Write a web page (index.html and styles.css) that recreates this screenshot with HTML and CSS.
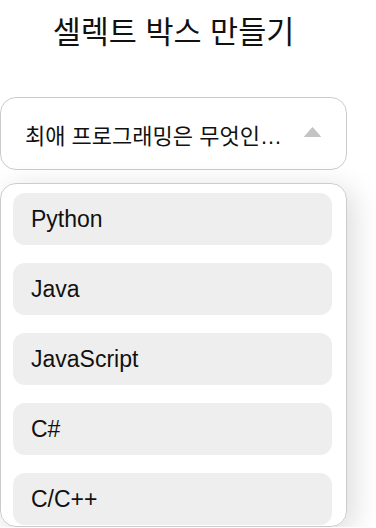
FILE: index.html
```html
<!DOCTYPE html>
<html lang="ko">
<head>
    <meta charset="UTF-8">
    <meta name="viewport" content="width=device-width, initial-scale=1.0">
    <title>셀렉트 박스 만들기</title>
    <link rel="stylesheet" href="styles.css">
</head>
<body>
    <main class="wrap">
        <h1>셀렉트 박스 만들기</h1>
        <div class="select">
            <p class="select_label">최애 프로그래밍은 무엇인가요?</p>
            <svg class="arrow" width="17" height="10" viewBox="0 0 17 10">
                <path d="M8.5 0.5 L16.5 9.5 L0.5 9.5 Z" fill="#c4c4c4" stroke="#c4c4c4" stroke-width="1" stroke-linejoin="round"/>
            </svg>
        </div>
        <ul class="option_list">
            <li class="option">Python</li>
            <li class="option">Java</li>
            <li class="option">JavaScript</li>
            <li class="option">C#</li>
            <li class="option">C/C++</li>
        </ul>
    </main>
</body>
</html>
```

FILE: styles.css
```css
* {
    margin: 0;
    padding: 0;
    box-sizing: border-box;
}
body {
    font-family: "Liberation Sans", "Noto Sans CJK KR", sans-serif;
    color: #111;
    background-color: white;
    overflow: hidden;
}
.wrap {
    width: 347px;
    padding-top: 10px;
}
h1 {
    font-family: "Noto Sans CJK KR", sans-serif;
    font-size: 30.5px;
    font-weight: normal;
    line-height: 40px;
    text-align: center;
    margin-bottom: 47px;
}
.select {
    height: 73px;
    border: 1px solid #ccc;
    border-radius: 16px;
    display: flex;
    align-items: center;
    gap: 12px;
    padding: 0 25px 0 24px;
}
.select_label {
    flex: 1;
    font-size: 22px;
    white-space: nowrap;
    overflow: hidden;
    text-overflow: ellipsis;
}
.arrow {
    flex-shrink: 0;
    margin-top: -4px;
}
.option_list {
    list-style: none;
    margin-top: 13px;
    height: 344px;
    border: 1px solid #ccc;
    border-radius: 16px;
    padding: 9px 14px 0 12px;
    display: flex;
    flex-direction: column;
    gap: 18px;
    overflow: hidden;
    box-shadow: 6px 6px 30px rgba(0, 0, 0, 0.15);
}
.option {
    flex-shrink: 0;
    height: 52px;
    background-color: #eee;
    border-radius: 12px;
    padding-left: 18px;
    font-size: 23px;
    display: flex;
    align-items: center;
}
```
